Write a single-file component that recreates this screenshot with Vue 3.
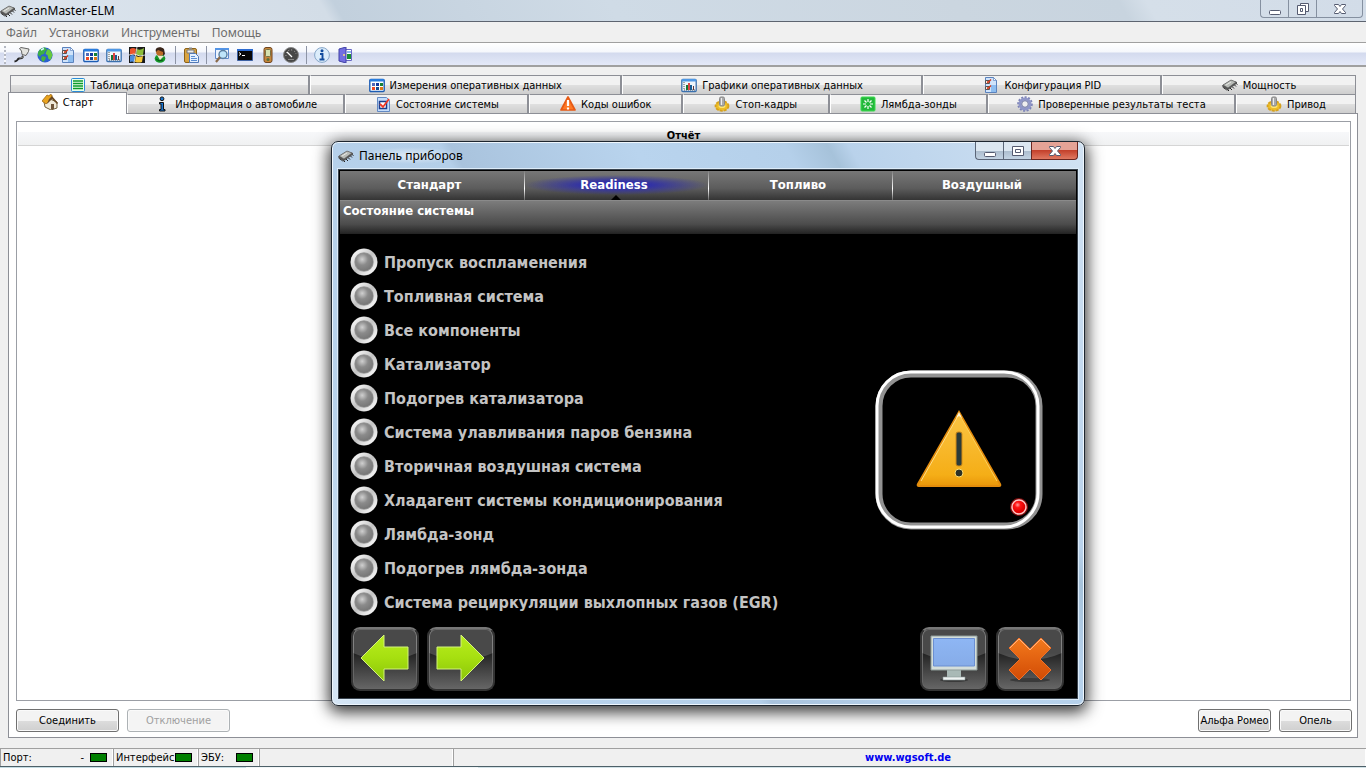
<template>
  <svg class="sprite" aria-hidden="true">
    <symbol id="chip" viewBox="0 0 16 16">
      <path d="M1 10l2 2M3 11.500l2 2M5 12l2 2M8 11l2 2M10 9.500l2 2M12 7.500l2 2M13.500 6l2 1.500" stroke="#222" stroke-width="1" />
      <path d="M0 8.500l9-5.500 6 2v1.500L6 13l-5-2z" fill="#555" />
      <path d="M1 8l8-5 5 2-8 6z" fill="#b9bcb8" stroke="#555" stroke-width=".6" />
      <path d="M4 8l5-3" stroke="#e8e8e4" />
    </symbol>
    <symbol id="plug" viewBox="0 0 16 16">
      <path d="M5.500 1.500L7 .5l8 1.500-.5 2.500L12 8.500l-4-1L7.500 4z" fill="#e4e4e0" stroke="#555" stroke-width=".9" />
      <path d="M9 8.500c0 3.500-2 2.500-4 3-2 .5-.5 2.500-4.500 3" fill="none" stroke="#222" stroke-width="2" />
      <path d="M9.500 8c0 3-2 2.500-4 3" fill="none" stroke="#bbb" stroke-width=".9" />
    </symbol>
    <symbol id="globe" viewBox="0 0 16 16">
      <circle cx="8" cy="8" r="7.600" fill="#2b5fd0" />
      <path d="M1 6C2 2 6 .5 8 .6l2 1.800-2 2L7 7 4 8 3 10 1 8z" fill="#3cb043" />
      <path d="M11 2l3 2 1.500 4-2 5-2-1-1-4-2-1 1-3z" fill="#66c93e" />
      <path d="M5 9l4 1-1 3-2 2-2-3z" fill="#49b13a" />
      <path d="M4 3l3-1.500" stroke="#d9f3ff" stroke-width="1.500" />
    </symbol>
    <symbol id="checks" viewBox="0 0 16 16">
      <path d="M2.500.5h8l3 3v12h-11z" fill="#cfe3fb" stroke="#5b82bd" />
      <path d="M10.500.5l3 3h-3z" fill="#fff" stroke="#5b82bd" stroke-width=".7" />
      <path d="M8 8h5v7H8z" fill="#8dbdf0" />
      <path d="M2.500 3.500h4v3h-4zM2.500 9.500h4v3h-4z" fill="#fff" stroke="#555" />
      <path d="M4 4.500l1 1 3-3M4 10.500l1 1 3-3" fill="none" stroke="#d33617" stroke-width="1.400" />
    </symbol>
    <symbol id="grid" viewBox="0 0 16 16">
      <rect x=".8" y="2.500" width="14.400" height="12" rx="1" fill="#fff" stroke="#1c5cb4" stroke-width="1.400" />
      <path d="M1 2h14v2.500H1z" fill="#287cde" />
      <path d="M3 6h3v3H3z" fill="#5068b8" /><path d="M7 6h3v3H7z" fill="#1238a0" /><path d="M11 6h3v3h-3z" fill="#168035" />
      <path d="M3 10h3v3H3z" fill="#ee4824" /><path d="M7 10h3v3H7z" fill="#164a90" /><path d="M11 10h3v3h-3z" fill="#df7915" />
    </symbol>
    <symbol id="chart" viewBox="0 0 16 16">
      <rect x=".8" y="2.500" width="14.400" height="12" rx="1" fill="#eef5fb" stroke="#3a70ae" stroke-width="1.300" />
      <path d="M1 2h14v2.500H1z" fill="#4e98e6" />
      <path d="M3 5v8h11" fill="none" stroke="#555" stroke-dasharray="1 1" />
      <path d="M5 8h2v5H5z" fill="#167634" /><path d="M7 6h2v7H7z" fill="#d44" />
      <path d="M9 8h2v5H9z" fill="#155b93" /><path d="M12 9h1v4h-1z" fill="#633" />
    </symbol>
    <symbol id="flag" viewBox="0 0 16 16">
      <path d="M0 0h16v16H0z" fill="#191919" />
      <path d="M1 2q3-2 6 0L6 8Q3 6 1 8z" fill="#ec542b" /><path d="M8 2q3 2 7-1l-1 7q-3 1-7 0z" fill="#8cbd3b" />
      <path d="M1 9q3-2 5 0l-1 6q-2-1-4 0z" fill="#4b8cdd" /><path d="M7 9q3 2 7 0l-1 6q-3 1-7 0z" fill="#f7c83b" />
      <path d="M8 0L5 16M0 8q6-2 8 0t8 0" fill="none" stroke="#fff" stroke-width=".8" />
    </symbol>
    <symbol id="person" viewBox="0 0 16 16">
      <ellipse cx="8" cy="11.500" rx="5.300" ry="4.300" fill="#159629" />
      <path d="M5 8l3 5 4-4" fill="#f0e8d4" />
      <circle cx="8" cy="4.800" r="4" fill="#bd6a27" />
      <path d="M4 5C2 0 9-1 12 2l1 5-2 2V5L6 3z" fill="#39251a" />
      <path d="M4 12q3 3 7 1" fill="none" stroke="#075614" />
    </symbol>
    <symbol id="paste" viewBox="0 0 16 16">
      <rect x="1.500" y="1.500" width="12" height="14" rx="1.500" fill="#d9a441" stroke="#8c6219" />
      <path d="M4 3h7v3H4z" fill="#e9e9e9" stroke="#777" /><path d="M6 .5h3v2H6z" fill="#888" />
      <path d="M6.500 6.500h6l3 3v6h-9z" fill="#e5f0fd" stroke="#5279b5" />
      <path d="M8 9.500h4M8 11.500h6M8 13.500h6" stroke="#5a8dd3" />
    </symbol>
    <symbol id="search" viewBox="0 0 16 16">
      <path d="M1.500 1.500h13v10h-13z" fill="#eef5ff" stroke="#5e8acc" /><path d="M1 1h14v2H1z" fill="#5394e6" />
      <circle cx="9" cy="7.500" r="4" fill="#bee4fa" stroke="#5a7ea0" stroke-width="1.400" />
      <path d="M6 10l-4 5" stroke="#8b6a4a" stroke-width="2.200" />
    </symbol>
    <symbol id="console" viewBox="0 0 16 16">
      <path d="M.5 2.500h15v11H.5z" fill="#080808" stroke="#3e62a4" /><path d="M0 2h16v2H0z" fill="#2b6ad0" />
      <path d="M2 5.500l2 1.500-2 1.500M5 8.500h3" fill="none" stroke="#fff" />
    </symbol>
    <symbol id="device" viewBox="0 0 16 16">
      <rect x="4" y=".5" width="8" height="15" rx="2" fill="#c5863b" stroke="#70451e" />
      <rect x="5.500" y="2.500" width="5" height="7" rx="1" fill="#d5e2b0" stroke="#7a7044" />
      <circle cx="8" cy="12.500" r="1.500" fill="#58703c" />
    </symbol>
    <symbol id="dial" viewBox="0 0 16 16">
      <circle cx="8" cy="8" r="7.500" fill="#474747" stroke="#888" />
      <path d="M3 9a5 5 0 0 1 10-2" fill="none" stroke="#bbb" stroke-dasharray="1 2" />
      <path d="M9 10L4 5" stroke="#fff" stroke-width="1.200" /><path d="M5 12.500h6" stroke="#888" />
    </symbol>
    <symbol id="about" viewBox="0 0 16 16">
      <circle cx="8" cy="8" r="7.400" fill="#dcedfb" stroke="#87a6c8" />
      <circle cx="8" cy="3.800" r="1.500" fill="#124c9d" /><path d="M6 7h2.500v5M5.500 12.500h5" fill="none" stroke="#124c9d" stroke-width="1.900" />
    </symbol>
    <symbol id="exit" viewBox="0 0 16 16">
      <path d="M8 2.500h6.500v11H8z" fill="#fff" stroke="#6868c4" /><path d="M10 7h4v5h-4z" fill="#198d35" />
      <path d="M10 4h4v2h-4z" fill="#8cb5ee" /><path d="M2 2l7-2v16l-7-2z" fill="#736fe0" stroke="#4141a5" /><circle cx="7" cy="8" r="1" fill="#ffe37a" />
    </symbol>
    <symbol id="sheet" viewBox="0 0 16 16">
      <rect x="1.500" y="1.500" width="13" height="13" rx="1" fill="#eaffea" stroke="#2a8ad8" />
      <path d="M3 4h10M3 6.500h10M3 9h10M3 11.500h10" stroke="#0c9a2c" stroke-width="1.500" />
    </symbol>
    <symbol id="home" viewBox="0 0 16 16">
      <path d="M2 8l6-3 7 3v6l-6 2-6-3z" fill="#f0ead9" stroke="#66532c" stroke-width=".9" />
      <path d="M0 7l5-6 2 1 1-1.500 2 .5v2L8 6l-4 4z" fill="#e9a31c" stroke="#9f6814" stroke-width=".8" />
      <path d="M7 5l3-3 6 7-1 1-5-5-5 5z" fill="#6b4a24" /><path d="M9 10h3v5l-3 .5z" fill="#71563a" />
    </symbol>
    <symbol id="info" viewBox="0 0 16 16">
      <circle cx="8" cy="2.800" r="1.900" fill="#1975d1" stroke="#111" />
      <path d="M5.500 6.500h4v7h1.500v1.500H5.500v-1.500H7V8H5.500z" fill="#1975d1" stroke="#111" />
    </symbol>
    <symbol id="state" viewBox="0 0 16 16">
      <path d="M2.500 1.500h9l3 3v11h-12z" fill="#c5ddfb" stroke="#6289c4" />
      <path d="M4.500 5.500h7v7h-7z" fill="#fff" stroke="#1c3f8c" stroke-width="1.500" /><path d="M5 8l3 3 6-8" fill="none" stroke="#ee3926" stroke-width="1.800" />
    </symbol>
    <symbol id="warn" viewBox="0 0 16 16">
      <path d="M8 1l7 13H1z" fill="#ff7925" stroke="#e65a15" stroke-width="1.700" stroke-linejoin="round" /><path d="M8 4v6M8 11.500v2" stroke="#fff" stroke-width="2.200" />
    </symbol>
    <symbol id="knob" viewBox="0 0 16 16">
      <ellipse cx="8" cy="10" rx="6.500" ry="4.800" fill="#edbd28" stroke="#d6a11d" stroke-width="1.800" stroke-dasharray="3 1" />
      <ellipse cx="8" cy="10" rx="3.500" ry="2" fill="#ffe570" /><rect x="5.500" y="1" width="5" height="9" rx="1.500" fill="#aaa" stroke="#888" /><path d="M7.500 2v7" stroke="#eee" />
    </symbol>
    <symbol id="lambda" viewBox="0 0 16 16">
      <rect x="1" y="1" width="14" height="14" rx="1" fill="#22b83b" stroke="#3ddc50" />
      <path d="M8 3v3M8 10v3M3 8h3M10 8h3M4.500 4.500l2 2M11.500 4.500l-2 2M4.500 11.500l2-2M11.500 11.500l-2-2" stroke="#fff" stroke-width="1.200" />
    </symbol>
    <symbol id="gear" viewBox="0 0 16 16">
      <circle cx="8" cy="8" r="6.800" fill="none" stroke="#7b82b6" stroke-width="2" stroke-dasharray="2 1.500" />
      <circle cx="8" cy="8" r="5" fill="none" stroke="#8f96c8" stroke-width="3" /><circle cx="8" cy="8" r="3.300" fill="#eee" stroke="#7077a4" />
    </symbol>
    <symbol id="min" viewBox="0 0 16 12"><rect x="2.500" y="7.500" width="11" height="4" rx="1" fill="#fff" stroke="#555b70" /></symbol>
    <symbol id="max" viewBox="0 0 16 12"><path d="M2.500 1.500h11v9h-11zM5.500 4.500h5v3h-5z" fill="#fff" stroke="#555b70" /></symbol>
    <symbol id="restore" viewBox="0 0 16 12"><path d="M5.500.5h8v8h-8z" fill="#fff" stroke="#555b70" /><path d="M2.500 2.500h8v9h-8zM5.500 5.500h2v3h-2z" fill="#fff" stroke="#555b70" /></symbol>
    <symbol id="close" viewBox="0 0 16 12"><path d="M2.500 1.500h4L8 3.500l1.500-2h4v1L10.500 6l3 3.500v1h-4L8 8.500l-1.500 2h-4v-1L5.500 6l-3-3.500z" fill="#fff" stroke="#555b70" /></symbol>
  </svg>

  <div class="app">
    <header class="titlebar">
      <svg class="icon"><use href="#chip" /></svg>
      <h1>ScanMaster-ELM</h1>
      <div class="controls">
        <button aria-label="Свернуть"><svg><use href="#min" /></svg></button>
        <button aria-label="Восстановить"><svg><use href="#restore" /></svg></button>
        <button class="close" aria-label="Закрыть"><svg><use href="#close" /></svg></button>
      </div>
    </header>

    <nav class="menu">
      <button v-for="item in menu" :key="item">{{ item }}</button>
    </nav>

    <div class="toolbar">
      <span class="grip"></span>
      <div v-for="(group, i) in tools" :key="i" class="tool-group">
        <button v-for="tool in group" :key="tool" :aria-label="tool">
          <svg class="icon"><use :href="'#' + tool" /></svg>
        </button>
      </div>
    </div>

    <main>
      <div class="tabs top-tabs">
        <button v-for="tab in topTabs" :key="tab.text" :style="{ flexGrow: tab.size }">
          <svg class="icon"><use :href="'#' + tab.icon" /></svg>{{ tab.text }}
        </button>
      </div>
      <div class="tabs">
        <button
          v-for="tab in tabs"
          :key="tab.text"
          :class="{ active: tab.text === current }"
          :style="{ flexGrow: tab.size }"
          @click="current = tab.text"
        >
          <svg class="icon"><use :href="'#' + tab.icon" /></svg>{{ tab.text }}
        </button>
      </div>
      <section class="page">
        <div class="report"><h2>Отчёт</h2></div>
        <div class="actions">
          <button class="wide">Соединить</button>
          <button class="wide" disabled>Отключение</button>
          <span class="space"></span>
          <button>Альфа Ромео</button>
          <button>Опель</button>
        </div>
      </section>
    </main>

    <footer class="status">
      <div class="cell port"><span>Порт:</span><span class="dash-mark">-</span><i class="lamp"></i></div>
      <div class="cell iface"><span>Интерфейс:</span><i class="lamp"></i></div>
      <div class="cell ecu"><span>ЭБУ:</span><i class="lamp"></i></div>
      <div class="cell blank"></div>
      <div class="cell site"><a href="#">www.wgsoft.de</a></div>
    </footer>
    <div class="taskbar"></div>

    <div class="dialog" role="dialog" aria-labelledby="dialog-title">
      <header class="dialog-title">
        <svg class="icon"><use href="#chip" /></svg>
        <h2 id="dialog-title">Панель приборов</h2>
        <div class="controls">
          <button aria-label="Свернуть"><svg><use href="#min" /></svg></button>
          <button aria-label="Развернуть"><svg><use href="#max" /></svg></button>
          <button class="close" aria-label="Закрыть"><svg><use href="#close" /></svg></button>
        </div>
      </header>
      <div class="dash">
        <nav class="dash-tabs">
          <button
            v-for="tab in dashTabs"
            :key="tab"
            :class="{ active: tab === dashTab }"
            @click="dashTab = tab"
          >{{ tab }}</button>
        </nav>
        <h3>Состояние системы</h3>
        <div class="dash-body">
          <ul>
            <li v-for="monitor in monitors" :key="monitor">
              <svg class="led" viewBox="0 0 28 28">
                <circle cx="14" cy="14" r="13.500" fill="#999" />
                <circle cx="14" cy="14" r="11.500" fill="none" stroke="url(#ring)" stroke-width="3.500" />
                <circle cx="14" cy="14" r="9" fill="url(#ball)" />
              </svg>
              {{ monitor }}
            </li>
          </ul>
          <svg class="mil" viewBox="0 0 168 160">
            <rect x="4" y="4" width="160" height="152" rx="32" fill="none" stroke="#929292" stroke-width="7" />
            <rect x="2" y="2" width="161" height="155" rx="34" fill="none" stroke="#fff" stroke-width="3" />
            <path d="M84 42l41 72q1 2-1 2H44q-2 0-1-2z" fill="url(#amber)" stroke="#e38c0c" stroke-width="2" />
            <path d="M84 44L46 111" stroke="#ffe089" stroke-width="1" /><path d="M84 44l38 67" stroke="#ffd35b" stroke-width="1" />
            <path d="M84 42l-3 6 3-2 3 2z" fill="#fff6d8" />
            <rect x="81" y="62" width="6" height="34" rx="2" fill="#2b3b38" stroke="#d18b18" />
            <circle cx="84" cy="103" r="4" fill="#2b3027" stroke="#ffdc6e" />
            <circle cx="144" cy="137" r="9" fill="#7b0b0b" />
            <circle cx="144" cy="137" r="7" fill="url(#red)" stroke="#ffc5c5" stroke-width="1.500" />
          </svg>
        </div>
        <div class="dash-actions">
          <button aria-label="Назад">
            <svg viewBox="0 0 68 64">
              <path class="gloss" d="M2 10q0-7 7-7h50q7 0 7 7v16Q34 40 2 26z" />
              <path d="M10 31l23-23v12h24v22H33v12z" fill="url(#lime)" stroke="#d3f47a" stroke-width="1" />
            </svg>
          </button>
          <button aria-label="Вперёд">
            <svg viewBox="0 0 68 64">
              <path class="gloss" d="M2 10q0-7 7-7h50q7 0 7 7v16Q34 40 2 26z" />
              <path d="M57 31L34 8v12H10v22h24v12z" fill="url(#lime)" stroke="#d3f47a" stroke-width="1" />
            </svg>
          </button>
          <span class="space"></span>
          <button aria-label="Экран">
            <svg viewBox="0 0 68 64">
              <path class="gloss" d="M2 10q0-7 7-7h50q7 0 7 7v16Q34 40 2 26z" />
              <ellipse cx="34" cy="53" rx="14" ry="2" fill="#3a3a3a" />
              <path d="M27 43h14v8H27z" fill="#a9b9b6" /><path d="M23 50h22v3H23z" fill="#eef3f2" stroke="#8c9997" stroke-width=".6" />
              <path d="M11 9h46v34H11z" fill="#d4deda" stroke="#8e9b98" />
              <path d="M13.500 11.500h41V39h-41z" fill="url(#screen)" stroke="#6b8fd1" />
            </svg>
          </button>
          <button aria-label="Закрыть панель">
            <svg viewBox="0 0 68 64">
              <path class="gloss" d="M2 10q0-7 7-7h50q7 0 7 7v16Q34 40 2 26z" />
              <ellipse cx="34" cy="53" rx="20" ry="2" fill="#3a3a3a" />
              <path d="M23 11l11 11 11-11 10 10-11 11 11 11-10 10-11-11-11 11-10-10 11-11-11-11z" fill="url(#orange)" stroke="#ef7129" />
              <path d="M14 21l9-9 11 11 11-11 9 9" fill="none" stroke="#ffb57c" />
            </svg>
          </button>
        </div>
      </div>
    </div>
  </div>

  <svg class="sprite" aria-hidden="true">
    <defs>
      <linearGradient id="ring" x2="1" y2="1"><stop offset="0" stop-color="#fff" /><stop offset=".5" stop-color="#c4c4c4" /><stop offset="1" stop-color="#fff" /></linearGradient>
      <radialGradient id="ball" cx=".4" cy=".35" r=".65"><stop offset="0" stop-color="#d0d0d0" /><stop offset=".5" stop-color="#8b8b8b" /><stop offset="1" stop-color="#777" /></radialGradient>
      <linearGradient id="amber" x2="0" y2="1"><stop offset="0" stop-color="#fbc545" /><stop offset=".85" stop-color="#f5ae17" /><stop offset="1" stop-color="#e99609" /></linearGradient>
      <radialGradient id="red" cx=".4" cy=".35"><stop offset="0" stop-color="#ff9c9c" /><stop offset=".4" stop-color="#ff1414" /><stop offset="1" stop-color="#e00000" /></radialGradient>
      <linearGradient id="lime" x2="0" y2="1"><stop offset="0" stop-color="#b9ee1e" /><stop offset=".5" stop-color="#a6df10" /><stop offset="1" stop-color="#8bc509" /></linearGradient>
      <linearGradient id="screen" x2="0" y2="1"><stop offset="0" stop-color="#8eb6f4" /><stop offset="1" stop-color="#86ace8" /></linearGradient>
      <linearGradient id="orange" x2="0" y2="1"><stop offset="0" stop-color="#f47a1d" /><stop offset="1" stop-color="#d14b05" /></linearGradient>
    </defs>
  </svg>
</template>

<script setup>
import { ref } from 'vue'

const current = ref('Старт')
const dashTab = ref('Readiness')

const menu = ['Файл', 'Установки', 'Инструменты', 'Помощь']

const tools = [
  ['plug', 'globe', 'checks', 'grid', 'chart', 'flag', 'person'],
  ['paste'],
  ['search', 'console', 'device', 'dial'],
  ['about', 'exit']
]

const topTabs = [
  { text: 'Таблица оперативных данных', icon: 'sheet', size: 300 },
  { text: 'Измерения оперативных данных', icon: 'grid', size: 312 },
  { text: 'Графики оперативных данных', icon: 'chart', size: 302 },
  { text: 'Конфигурация PID', icon: 'checks', size: 238 },
  { text: 'Мощность', icon: 'chip', size: 194 }
]

const tabs = [
  { text: 'Старт', icon: 'home', size: 119 },
  { text: 'Информация о автомобиле', icon: 'info', size: 219 },
  { text: 'Состояние системы', icon: 'state', size: 184 },
  { text: 'Коды ошибок', icon: 'warn', size: 153 },
  { text: 'Стоп-кадры', icon: 'knob', size: 146 },
  { text: 'Лямбда-зонды', icon: 'lambda', size: 158 },
  { text: 'Проверенные результаты теста', icon: 'gear', size: 249 },
  { text: 'Привод', icon: 'knob', size: 120 }
]

const dashTabs = ['Стандарт', 'Readiness', 'Топливо', 'Воздушный']

const monitors = [
  'Пропуск воспламенения',
  'Топливная система',
  'Все компоненты',
  'Катализатор',
  'Подогрев катализатора',
  'Система улавливания паров бензина',
  'Вторичная воздушная система',
  'Хладагент системы кондиционирования',
  'Лямбда-зонд',
  'Подогрев лямбда-зонда',
  'Система рециркуляции выхлопных газов (EGR)'
]
</script>

<style>
body {
  margin: 0;
  background: #f0f0f0;
}
</style>

<style scoped>
* {
  box-sizing: border-box;
}
h1, h2, h3, ul {
  margin: 0;
  padding: 0;
}
button {
  font: inherit;
  color: inherit;
  margin: 0;
  padding: 0;
  border: none;
  background: none;
}
.sprite {
  position: absolute;
  width: 0;
  height: 0;
}
.icon {
  width: 16px;
  height: 16px;
  flex: none;
}
.space {
  flex: 1;
}
.app {
  position: relative;
  display: flex;
  flex-direction: column;
  min-height: 100vh;
  overflow: hidden;
  background: #f0f0f0;
  color: #000;
  font-family: "DejaVu Sans Condensed", "DejaVu Sans", sans-serif;
  font-size: 11px;
}

.titlebar {
  display: flex;
  height: 22px;
  align-items: center;
  gap: 5px;
  border-bottom: 1px solid #5d6470;
  background: linear-gradient(60deg, #dce5ee 0%, #d3dde7 24%, #c2d0dd 25%, #cfdbe6 45%, #cbd6e0 70%, #c8d4df 82%, #d5dfe9 84%, #d2dce8 100%);
}
.titlebar h1, .dialog-title h2 {
  font: 12px "Noto Sans", sans-serif;
}
.controls {
  display: flex;
  align-self: flex-start;
  margin-left: auto;
}
.controls button {
  display: flex;
  align-items: center;
  justify-content: center;
  width: 28px;
  height: 18px;
  border: 1px solid #8590a0;
  border-top: none;
  border-right: none;
}
.controls button:first-child {
  border-bottom-left-radius: 4px;
}
.controls .close {
  width: 47px;
  border-right: 1px solid #8590a0;
  border-bottom-right-radius: 4px;
}
.controls svg {
  width: 16px;
  height: 12px;
}
.titlebar .controls {
  margin-right: 3px;
}

.menu {
  display: flex;
  gap: 12px;
  height: 20px;
  padding-left: 6px;
  font: 12px "Noto Sans", sans-serif;
  color: #6d6d6d;
}

.toolbar {
  display: flex;
  height: 25px;
  padding-top: 1px;
  align-items: center;
  border-top: 1px solid #a0a0a0;
  border-bottom: 2px solid #a0a0a0;
  background: linear-gradient(#fff 0, #f5f7fc 9px, #d3daee 10px, #e4e9f8 100%);
}
.grip {
  width: 2px;
  height: 18px;
  margin: 0 4px;
  background: repeating-linear-gradient(#b4b8c2 0 2px, #f6f7fb 2px 4px);
}
.tool-group {
  display: flex;
}
.tool-group + .tool-group::before {
  content: "";
  width: 1px;
  height: 18px;
  margin: 0 3px 0 4px;
  background: #8d94a5;
}
.tool-group button {
  display: flex;
  align-items: center;
  justify-content: center;
  width: 23px;
}

main {
  flex: 1;
  display: flex;
  flex-direction: column;
  padding: 8px 8px 10px;
}
.tabs {
  display: flex;
  height: 19px;
  margin-right: 2px;
}
.top-tabs {
  margin-left: 2px;
}
.tabs button {
  display: flex;
  flex: 1 1 0;
  align-items: center;
  justify-content: center;
  gap: 5px;
  min-width: 0;
  white-space: nowrap;
  border: 1px solid #8d8f96;
  border-right-width: 2px;
  border-bottom: none;
  border-left: 1px solid #fff;
  background: linear-gradient(#f2f2f2 0 50%, #e0e0e0 50%, #cecece);
}
.tabs button:first-child {
  border-left: 1px solid #8d8f96;
}
.tabs button:last-child {
  border-right-width: 1px;
}
.tabs .active {
  margin-top: -2px;
  margin-bottom: -1px;
  padding-bottom: 3px;
  border-right-width: 1px;
  background: #fff;
  z-index: 1;
}
.page {
  flex: 1;
  display: flex;
  flex-direction: column;
  padding: 7px 5px 5px 7px;
  background: #fff;
  border: 1px solid #8d8f96;
}
.report {
  flex: 1;
  margin-right: 1px;
  padding: 10px 1px 0;
  border: 1px solid #9b9ea5;
}
.report h2 {
  height: 14px;
  border-bottom: 1px solid #d5d5d5;
  background: linear-gradient(#f7f8fa, #f0f1f2);
  font-size: 11px;
  line-height: 7px;
  text-align: center;
}
.actions {
  display: flex;
  gap: 8px;
  padding-top: 8px;
}
.actions button {
  width: 73px;
  height: 23px;
  border: 1px solid #707070;
  border-radius: 3px;
  background: linear-gradient(#f3f3f3 0 50%, #dddddd 50%, #cfcfcf);
  box-shadow: inset 0 0 0 1px #fafafa;
  white-space: nowrap;
}
.actions .wide {
  width: 103px;
}
.actions button:disabled {
  color: #a0a0a0;
  border-color: #adb2b5;
  background: #f4f4f4;
}

.status {
  display: flex;
  height: 18px;
  border-top: 1px solid #a0a0a0;
}
.cell {
  display: flex;
  align-items: center;
  flex: none;
  padding: 0 5px 0 2px;
  border-right: 1px solid #fff;
  border-left: 1px solid #a0a0a0;
}
.cell span {
  flex: 1 1 0;
  min-width: 0;
}
.cell .dash-mark {
  flex: none;
  margin-right: 6px;
}
.lamp {
  flex: none;
  width: 17px;
  height: 9px;
  border: 1px solid #000;
  background: #008000;
}
.port {
  width: 113px;
}
.iface {
  width: 85px;
}
.ecu {
  width: 61px;
}
.blank {
  width: 194px;
}
.site {
  flex: 1;
  justify-content: center;
}
.site a {
  color: #0000f0;
  font-weight: bold;
  text-decoration: none;
}
.taskbar {
  height: 2px;
  border-top: 1px solid #4d6068;
  background: linear-gradient(90deg, #c5dce3 18%, #f1f6f7 18% 35%, #d2e2e7 35%);
}

/* floating window */
.dialog {
  position: absolute;
  left: 331px;
  top: 141px;
  width: 754px;
  padding: 0 6px 6px;
  border: 1px solid #1e262f;
  border-radius: 7px;
  background: linear-gradient(60deg, #d6e6f5 0%, #b9d3ec 15%, #b4cfe9 40%, #a9c3dd 41%, #b9d4ee 58%, #b5d0ea 72%, #a6c2da 76%, #b9d2eb 78%, #d1e2f3 100%);
  box-shadow: inset 0 0 0 1px #eef6fd, 0 4px 16px 2px rgba(0, 0, 0, .8);
}
.dialog-title {
  display: flex;
  align-items: center;
  gap: 5px;
  height: 27px;
}
.dialog-title h2 {
  background: radial-gradient(closest-side, rgba(255, 255, 255, .55), transparent);
}
.dialog-title .controls button {
  border-color: #5b6678;
  background: linear-gradient(#dce7f1 0 50%, #abbccd 50%, #c3d3e3);
}
.dialog-title .controls .close {
  border-color: #6b2620;
  background: linear-gradient(#e5a396 0 45%, #c4412c 50%, #e07962);
}
.dash {
  padding: 1px;
  border: 1px solid #39434e;
  outline: 1px solid #dcebf8;
  background: #000;
  color: #fff;
}
.dash-tabs {
  display: grid;
  grid-template-columns: repeat(4, 1fr);
  height: 29px;
  background: linear-gradient(#777, #5c5c5c 60%, #343434);
}
.dash-tabs button {
  position: relative;
  padding: 0 5px 3px 0;
  font-size: 13px;
  font-weight: bold;
}
.dash-tabs button + button {
  border-left: 1px solid;
  border-image: linear-gradient(#777, #fff 60%, #555) 1;
}
.dash-tabs .active {
  background: radial-gradient(ellipse 50% 10px at 50% 14px, #2b2bb4 0, #3030a8 35%, transparent 100%);
}
.dash-tabs .active::after {
  content: "";
  position: absolute;
  left: 50%;
  bottom: 0;
  margin-left: -6px;
  border: 5px solid transparent;
  border-top: none;
  border-bottom-color: #000;
}
.dash h3 {
  height: 34px;
  padding: 0 3px;
  border-top: 1px solid #8a8a8a;
  background: linear-gradient(#7c7c7c, #4c4c4c 70%, #222);
  font-size: 13px;
  line-height: 20px;
}
.dash-body {
  display: flex;
  justify-content: space-between;
  align-items: flex-start;
  padding: 11px 33px 0 10px;
}
.dash-body ul {
  list-style: none;
}
.dash-body li {
  display: flex;
  align-items: center;
  gap: 6px;
  height: 34px;
  color: #c3c3c3;
  font-size: 16px;
  font-weight: bold;
  white-space: nowrap;
}
.led {
  width: 28px;
  height: 28px;
}
.mil {
  width: 168px;
  height: 160px;
  margin-top: 125px;
}
.dash-actions {
  display: flex;
  gap: 8px;
  padding: 8px 12px 6px 11px;
}
.dash-actions button {
  width: 68px;
  height: 64px;
  border: 2px solid #333;
  border-top-color: #777;
  border-radius: 9px;
  background: linear-gradient(#222 40%, #3a3a3a 60%, #666);
  box-shadow: inset 0 0 0 1px #666;
}
.dash-actions svg {
  display: block;
  width: 68px;
  height: 64px;
  margin: -2px;
}
.gloss {
  fill: #fff;
  fill-opacity: .18;
}
</style>
